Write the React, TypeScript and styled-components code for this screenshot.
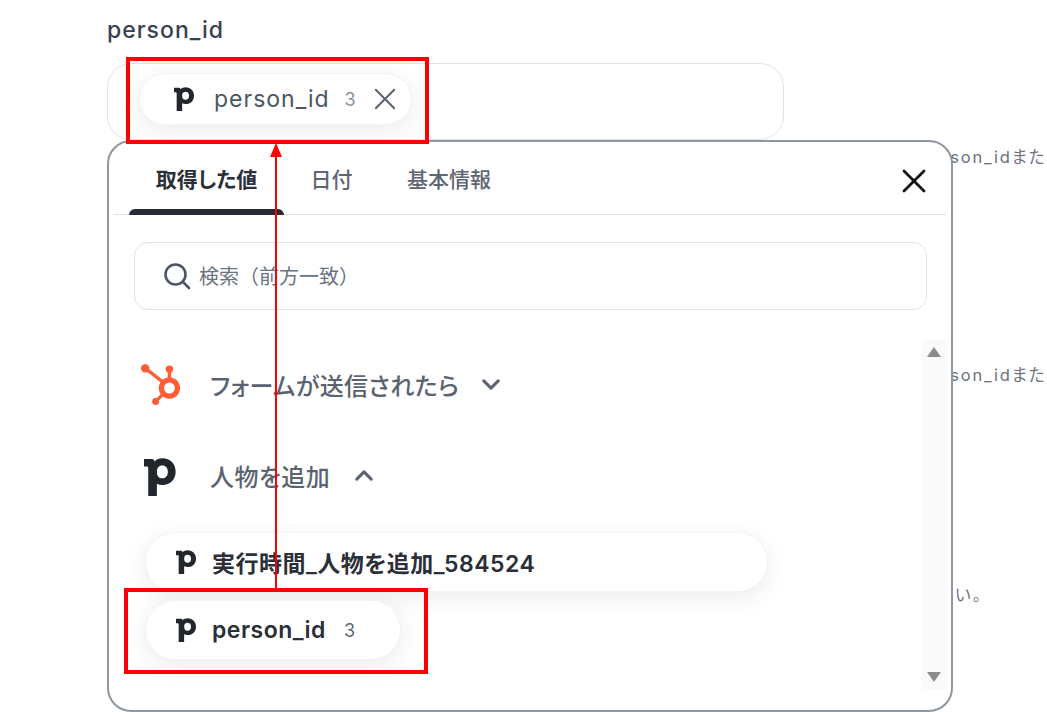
import React from "react";
import styled, { createGlobalStyle } from "styled-components";
import { SiHubspot } from "react-icons/si";

const GlobalStyle = createGlobalStyle`
  html, body {
    margin: 0;
    height: 100%;
    overflow: hidden;
    background: #ffffff;
  }
  * {
    box-sizing: border-box;
  }
`;

const Page = styled.div`
  position: relative;
  width: 1047px;
  height: 712px;
  padding: 17px 0 0 107px;
  overflow: hidden;
  font-family: Inter, "Noto Sans CJK JP", sans-serif;
  font-feature-settings: "palt";
`;

const FieldLabel = styled.div`
  height: 26px;
  margin-bottom: 20px;
  font-size: 23px;
  line-height: 26px;
  font-weight: 500;
  letter-spacing: 1px;
  color: #374151;
`;

const Field = styled.div`
  display: flex;
  align-items: flex-start;
  width: 677px;
  height: 77px;
  padding: 9px 0 0 31px;
  border: 1px solid #dfe3ea;
  border-radius: 24px;
`;

const Chip = styled.div<{ $width: number; $height: number }>`
  display: flex;
  align-items: center;
  width: ${(p) => p.$width}px;
  height: ${(p) => p.$height}px;
  flex-shrink: 0;
  background: #ffffff;
  border: 1px solid #f2f3f6;
  border-radius: 999px;
  box-shadow: 0 6px 24px rgba(30, 40, 60, 0.09);
`;

const FieldChip = styled(Chip)`
  padding-left: 34px;
`;

const FieldChipName = styled.span`
  margin-left: 20px;
  font-size: 23px;
  letter-spacing: 1px;
  color: #4b5563;
`;

const FieldChipCount = styled.span`
  margin-left: 15px;
  font-size: 18px;
  color: #8b9099;
`;

const ChipClose = styled.span`
  display: flex;
  margin-left: 18px;
  color: #5b6370;
`;

const Note = styled.div<{ $top: number; $left: number }>`
  margin-top: ${(p) => p.$top}px;
  margin-left: ${(p) => p.$left}px;
  font-size: 16.5px;
  line-height: 22px;
  white-space: nowrap;
  color: #6b7280;
  letter-spacing: 1.8px;
`;

const Popup = styled.div`
  position: absolute;
  left: 107px;
  top: 140px;
  width: 846px;
  height: 572px;
  display: flex;
  flex-direction: column;
  padding: 0 5px;
  background: #ffffff;
  border: 2px solid #8f96a0;
  border-radius: 24px;
`;

const TabBar = styled.div`
  display: flex;
  align-items: stretch;
  height: 73px;
  padding-left: 15px;
  border-bottom: 1px solid #dbe0e7;
`;

const Tab = styled.div<{ $active?: boolean; $width: number }>`
  position: relative;
  display: flex;
  align-items: center;
  justify-content: center;
  width: ${(p) => p.$width}px;
  font-size: 21px;
  font-weight: ${(p) => (p.$active ? 700 : 500)};
  color: ${(p) => (p.$active ? "#2a2f38" : "#5f6672")};

  &::after {
    content: "";
    display: ${(p) => (p.$active ? "block" : "none")};
    position: absolute;
    left: 0;
    right: 0;
    bottom: -1px;
    height: 6px;
    background: #252a34;
    border-radius: 6px 6px 0 0;
  }
`;

const PopupClose = styled.div`
  display: flex;
  margin: 27px 20px 0 auto;
  height: 30px;
  color: #111111;
`;

const SearchBox = styled.div`
  display: flex;
  align-items: center;
  gap: 8px;
  height: 68px;
  margin: 27px 19px 0 20px;
  padding: 0 0 1px 28px;
  border: 1px solid #dfe3ea;
  border-radius: 14px;
  font-size: 20px;
  font-feature-settings: normal;
  color: #6b7280;
`;

const ListArea = styled.div`
  display: flex;
  margin-top: 30px;
  height: 351px;
`;

const List = styled.div`
  flex: 1;
  min-width: 0;
  padding: 21px 0 0 19px;
`;

const Scrollbar = styled.div`
  display: flex;
  flex-direction: column;
  align-items: center;
  justify-content: space-between;
  width: 25px;
  margin-right: -1px;
  padding: 7px 2px 9px 0;
  background: #fafafa;
`;

const ScrollArrow = styled.div<{ $down?: boolean }>`
  width: 0;
  height: 0;
  border-left: 7px solid transparent;
  border-right: 7px solid transparent;
  border-${(p) => (p.$down ? "top" : "bottom")}: 10px solid #8c8c8c;
`;

const GroupRow = styled.div<{ $top: number }>`
  display: flex;
  align-items: center;
  margin-top: ${(p) => p.$top}px;
  height: 46px;
`;

const GroupIcon = styled.div<{ $drop?: number }>`
  display: flex;
  justify-content: center;
  width: 54px;
  margin-right: 23px;
  padding-top: ${(p) => p.$drop ?? 0}px;
`;

const GroupName = styled.span`
  font-size: 24px;
  font-weight: 500;
  letter-spacing: 0.4px;
  color: #5b6370;
`;

const GroupChevron = styled.span<{ $gap: number }>`
  display: flex;
  margin-left: ${(p) => p.$gap}px;
  color: #5b6370;
`;

const ValueChip = styled(Chip)<{ $top: number }>`
  margin: ${(p) => p.$top}px 0 0 12px;
  padding-left: 30px;
`;

const ValueName = styled.span`
  margin-left: 16px;
  font-size: 23px;
  font-weight: 600;
  letter-spacing: 0.5px;
  color: #2a2f38;
`;

const ValueCount = styled.span`
  margin-left: 18px;
  font-size: 18px;
  color: #5f6672;
`;

const RedBox = styled.div<{ $left: number; $top: number; $width: number; $height: number }>`
  position: absolute;
  left: ${(p) => p.$left}px;
  top: ${(p) => p.$top}px;
  width: ${(p) => p.$width}px;
  height: ${(p) => p.$height}px;
  border: 4px solid #ff0000;
`;

const Arrow = styled.svg`
  position: absolute;
  left: 268px;
  top: 143px;
`;

function PipedriveIcon({ size }: { size: number }) {
  return (
    <svg width={(size * 30) / 36} height={size} viewBox="0 0 30 36" style={{ flexShrink: 0 }}>
      <path
        fill="#22272e"
        fillRule="evenodd"
        d="M0 1H7.5C8.6 1 9.6 1.8 10 3.2C11.8 1.4 14.4 0.3 17.5 0.3C25 0.3 30 5.8 30 13C30 20.2 25 25.6 17.5 25.6C15.6 25.6 13.8 25.2 12.2 24.4V36H4V9.6C4 8.4 3.5 8 2.5 8H0ZM17.2 7.2C14 7.2 12.2 9.6 12.2 13.2C12.2 16.8 14 19.2 17.2 19.2C20.6 19.2 22.6 16.8 22.6 13.2C22.6 9.6 20.6 7.2 17.2 7.2Z"
      />
    </svg>
  );
}

function CrossIcon({ size, weight }: { size: number; weight: number }) {
  return (
    <svg width={size} height={size} viewBox="0 0 24 24" fill="none" stroke="currentColor" strokeWidth={weight} strokeLinecap="round">
      <path d="M2 2L22 22M22 2L2 22" />
    </svg>
  );
}

function ChevronIcon({ up }: { up?: boolean }) {
  return (
    <svg width="18" height="11" viewBox="0 0 20 12" fill="none" stroke="currentColor" strokeWidth="3.4" strokeLinecap="round" strokeLinejoin="round">
      <path d={up ? "M2 10L10 2L18 10" : "M2 2L10 10L18 2"} />
    </svg>
  );
}

function SearchIcon() {
  return (
    <svg width="28" height="28" viewBox="0 0 28 28" fill="none" stroke="#4b5563" strokeWidth="2.6" strokeLinecap="round">
      <circle cx="12.5" cy="12.5" r="10" />
      <path d="M20 20L26 26" />
    </svg>
  );
}

export default function App() {
  return (
    <Page>
      <GlobalStyle />
      <FieldLabel>person_id</FieldLabel>
      <Field>
        <FieldChip $width={273} $height={52}>
          <PipedriveIcon size={24} />
          <FieldChipName>person_id</FieldChipName>
          <FieldChipCount>3</FieldChipCount>
          <ChipClose>
            <CrossIcon size={22} weight={2.2} />
          </ChipClose>
        </FieldChip>
      </Field>
      <Note $top={6} $left={812}>person_idまた</Note>
      <Note $top={196} $left={812}>person_idまた</Note>
      <Note $top={198} $left={800}>ください。</Note>

      <Popup>
        <TabBar>
          <Tab $active $width={155}>取得した値</Tab>
          <Tab $width={95}>日付</Tab>
          <Tab $width={140}>基本情報</Tab>
          <PopupClose>
            <CrossIcon size={24} weight={2.8} />
          </PopupClose>
        </TabBar>
        <SearchBox>
          <SearchIcon />
          検索（前方一致）
        </SearchBox>
        <ListArea>
          <List>
            <GroupRow $top={0}>
              <GroupIcon>
                <SiHubspot size={41} color="#ff5c35" />
              </GroupIcon>
              <GroupName>フォームが送信されたら</GroupName>
              <GroupChevron $gap={23}>
                <ChevronIcon />
              </GroupChevron>
            </GroupRow>
            <GroupRow $top={45}>
              <GroupIcon $drop={4}>
                <PipedriveIcon size={38} />
              </GroupIcon>
              <GroupName>人物を追加</GroupName>
              <GroupChevron $gap={25}>
                <ChevronIcon up />
              </GroupChevron>
            </GroupRow>
            <ValueChip $width={623} $height={60} $top={34}>
              <PipedriveIcon size={24} />
              <ValueName>実行時間_人物を追加_584524</ValueName>
            </ValueChip>
            <ValueChip $width={256} $height={60} $top={8}>
              <PipedriveIcon size={24} />
              <ValueName>person_id</ValueName>
              <ValueCount>3</ValueCount>
            </ValueChip>
          </List>
          <Scrollbar>
            <ScrollArrow />
            <ScrollArrow $down />
          </Scrollbar>
        </ListArea>
      </Popup>

      <RedBox $left={126} $top={57} $width={303} $height={87} />
      <RedBox $left={124} $top={588} $width={304} $height={86} />
      <Arrow width="16" height="446" viewBox="0 0 16 446">
        <path d="M8 0L14 14H2Z" fill="#ff0000" />
        <path d="M8 12V446" stroke="#ff0000" strokeWidth="2" />
      </Arrow>
    </Page>
  );
}
